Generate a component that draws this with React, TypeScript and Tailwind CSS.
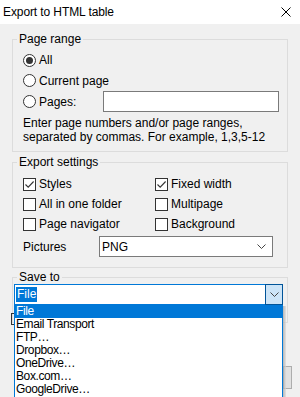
import React from "react";

function Radio({ checked }: { checked?: boolean }) {
  return (
    <span className="w-[13px] h-[13px] rounded-full border border-[#333333] bg-white flex items-center justify-center shrink-0">
      {checked && <span className="w-[7px] h-[7px] rounded-full bg-[#333333]" />}
    </span>
  );
}

function Check({ checked }: { checked?: boolean }) {
  return (
    <span className="w-[13px] h-[13px] border border-[#333333] bg-white flex items-center justify-center shrink-0">
      {checked && (
        <svg width="11" height="11" viewBox="0 0 11 11">
          <path d="M1.5 5.5 L4.2 8.2 L9.6 2.5" fill="none" stroke="#333333" strokeWidth="1.1" />
        </svg>
      )}
    </span>
  );
}

function Chevron() {
  return (
    <svg width="9" height="5" viewBox="0 0 9 5">
      <path d="M0.5 0.5 L4.5 4.5 L8.5 0.5" fill="none" stroke="#444444" strokeWidth="1" />
    </svg>
  );
}

export default function App() {
  const items = ["File", "Email Transport", "FTP…", "Dropbox…", "OneDrive…", "Box.com…", "GoogleDrive…"];
  return (
    <div className="relative w-[300px] h-[397px] overflow-hidden bg-[#f0f0f0] text-[12px] leading-[14px] text-black font-['Liberation_Sans',Arial,sans-serif]">
      <div className="h-[24px] bg-white flex items-center justify-between pl-[3px] pr-[9px]">
        <span className="text-[12px] tracking-[-0.1px]">Export to HTML table</span>
        <svg width="10" height="10" viewBox="0 0 10 10">
          <path d="M0.5 0.5 L9.5 9.5 M9.5 0.5 L0.5 9.5" stroke="#000" strokeWidth="1" />
        </svg>
      </div>

      <div className="px-[12px] pt-[8px]">
        <fieldset className="border border-[#dcdcdc] p-0 m-0 h-[120px]">
          <legend className="ml-[4px] px-[2px] leading-[14px]">Page range</legend>
          <div className="pt-[4px] pl-[10px] pr-[8px]">
            <div className="flex items-center h-[20px]">
              <Radio checked />
              <span className="ml-[3px]">All</span>
            </div>
            <div className="flex items-center h-[21px]">
              <Radio />
              <span className="ml-[3px]">Current page</span>
            </div>
            <div className="flex items-center h-[21px]">
              <Radio />
              <span className="ml-[3px]">Pages:</span>
              <div className="ml-auto w-[176px] h-[21px] border border-[#7a7a7a] bg-white" />
            </div>
            <div className="mt-[4px] leading-[14px]">
              Enter page numbers and/or page ranges,
              <br />
              separated by commas. For example, 1,3,5-12
            </div>
          </div>
        </fieldset>

        <fieldset className="border border-[#dcdcdc] p-0 m-0 mt-[3px] h-[113px]">
          <legend className="ml-[4px] px-[2px] leading-[14px]">Export settings</legend>
          <div className="pt-[5px] pl-[10px] pr-[14px]">
            <div className="grid grid-cols-[132px_1fr]">
              <div className="flex items-center h-[20px]">
                <Check checked />
                <span className="ml-[3px]">Styles</span>
              </div>
              <div className="flex items-center h-[20px]">
                <Check checked />
                <span className="ml-[3px]">Fixed width</span>
              </div>
              <div className="flex items-center h-[20px]">
                <Check />
                <span className="ml-[3px]">All in one folder</span>
              </div>
              <div className="flex items-center h-[20px]">
                <Check />
                <span className="ml-[3px]">Multipage</span>
              </div>
              <div className="flex items-center h-[20px]">
                <Check />
                <span className="ml-[3px]">Page navigator</span>
              </div>
              <div className="flex items-center h-[20px]">
                <Check />
                <span className="ml-[3px]">Background</span>
              </div>
            </div>
            <div className="mt-[2px] flex items-center h-[21px]">
              <span className="w-[76px]">Pictures</span>
              <div className="w-[174px] h-[21px] border border-[#7a7a7a] bg-white flex items-center pl-[2px] pr-[6px]">
                <span className="flex-1">PNG</span>
                <Chevron />
              </div>
            </div>
          </div>
        </fieldset>

        <fieldset className="border border-[#dcdcdc] p-0 m-0 mt-[2px] h-[53px]">
          <legend className="ml-[4px] px-[2px] leading-[14px]">Save to</legend>
          <div className="ml-[1px] w-[269px] h-[21px] flex">
            <div className="flex-1 border-y border-l border-[#0078d7] bg-white flex items-center">
              <span className="ml-[1px] h-[15px] px-[1px] bg-[#0078d7] text-white leading-[15px]">File</span>
            </div>
            <div className="w-[18px] h-[21px] border border-[#005499] bg-[#cce4f7] flex items-center justify-center">
              <Chevron />
            </div>
          </div>
        </fieldset>
      </div>

      <div className="absolute left-[11px] top-[313px] w-[4px] h-[12px] border-l border-t border-b border-[#333333]" />
      <div className="absolute left-[283px] top-[366px] w-[9px] h-[23px] border border-[#adadad] bg-[#e1e1e1]" />
      <div className="absolute left-[283px] top-[306px] w-[3px] h-[91px] bg-gradient-to-r from-[#a0a0a0] to-[#dcdcdc] opacity-70" />

      <div className="absolute left-[14px] top-[305px] w-[269px] h-[100px] bg-white border-x border-[#0078d7] tracking-[-0.4px]">
        {items.map((t, i) => (
          <div
            key={t}
            className={
              i === 0
                ? "h-[13px] leading-[13px] pl-[1px] bg-[#0078d7] text-white"
                : "h-[13px] leading-[13px] pl-[1px] text-black"
            }
          >
            {t}
          </div>
        ))}
      </div>
    </div>
  );
}
